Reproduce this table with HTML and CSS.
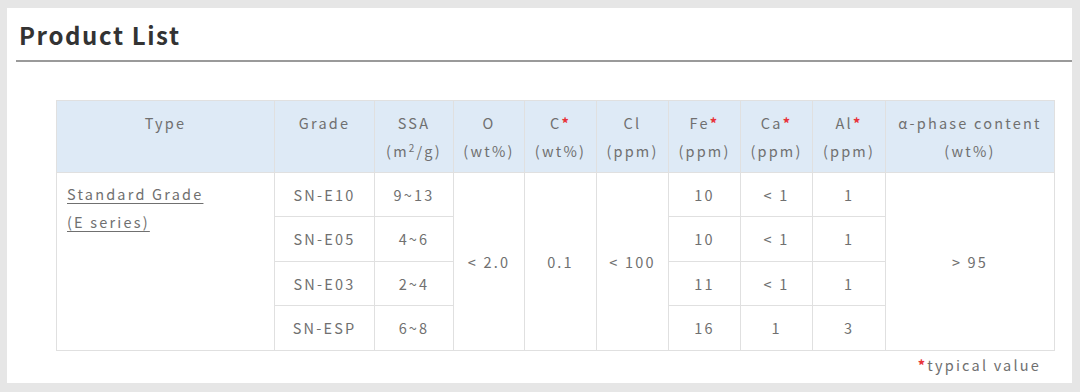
FILE: index.html
```html
<!DOCTYPE html>
<html>
<head>
<meta charset="utf-8">
<link rel="stylesheet" href="styles.css">
</head>
<body>
<div class="panel">
  <h1 class="title">Product List</h1>
  <div class="content">
    <table class="spec">
      <colgroup>
        <col class="c-type"><col class="c-grade"><col class="c-ssa"><col class="c-o"><col class="c-c"><col class="c-cl"><col class="c-fe"><col class="c-ca"><col class="c-al"><col class="c-alpha">
      </colgroup>
      <thead>
        <tr>
          <th>Type</th>
          <th>Grade</th>
          <th>SSA<br>(m<sup>2</sup>/g)</th>
          <th>O<br>(wt%)</th>
          <th>C<span class="ast">*</span><br>(wt%)</th>
          <th>Cl<br>(ppm)</th>
          <th>Fe<span class="ast">*</span><br>(ppm)</th>
          <th>Ca<span class="ast">*</span><br>(ppm)</th>
          <th>Al<span class="ast">*</span><br>(ppm)</th>
          <th>α-phase content<br>(wt%)</th>
        </tr>
      </thead>
      <tbody>
        <tr>
          <td rowspan="4" class="type"><a class="link">Standard Grade<br>(E series)</a></td>
          <td>SN-E10</td>
          <td>9~13</td>
          <td rowspan="4">&lt; 2.0</td>
          <td rowspan="4">0.1</td>
          <td rowspan="4">&lt; 100</td>
          <td>10</td>
          <td>&lt; 1</td>
          <td>1</td>
          <td rowspan="4">&gt; 95</td>
        </tr>
        <tr class="tall">
          <td>SN-E05</td>
          <td>4~6</td>
          <td>10</td>
          <td>&lt; 1</td>
          <td>1</td>
        </tr>
        <tr>
          <td>SN-E03</td>
          <td>2~4</td>
          <td>11</td>
          <td>&lt; 1</td>
          <td>1</td>
        </tr>
        <tr class="tall">
          <td>SN-ESP</td>
          <td>6~8</td>
          <td>16</td>
          <td>1</td>
          <td>3</td>
        </tr>
      </tbody>
    </table>
    <p class="note"><span class="ast">*</span>typical value</p>
  </div>
</div>
</body>
</html>
```

FILE: styles.css
```css
html, body {
  margin: 0;
  padding: 0;
}
body {
  background: #e6e6e6;
  padding: 8px 8px 0 7px;
  font-family: "Noto Sans CJK JP", "Noto Sans", sans-serif;
}
.panel {
  background: #fff;
  width: 1065px;
  height: 375px;
  box-sizing: border-box;
  padding-left: 9px;
}
.title {
  margin: 0;
  padding: 9px 0 7px 3px;
  font-size: 24px;
  line-height: 36px;
  font-weight: 700;
  letter-spacing: 1.6px;
  color: #333;
  border-bottom: 2px solid #9a9a9a;
}
.content {
  padding: 38px 18px 0 40px;
}
.spec {
  border-collapse: collapse;
  width: 998px;
  table-layout: fixed;
  color: #707070;
  font-size: 14.5px;
  letter-spacing: 2.2px;
}
.c-type { width: 218px; }
.c-grade { width: 100px; }
.c-ssa { width: 79px; }
.c-o { width: 71px; }
.c-c, .c-cl, .c-fe, .c-ca { width: 72px; }
.c-al { width: 73px; }
.c-alpha { width: 169px; }
.spec th, .spec td {
  border: 1px solid #e0e0e0;
  text-align: center;
  padding: 0;
}
.spec th {
  background: #deeaf6;
  font-weight: 400;
  vertical-align: top;
  line-height: 28px;
  height: 72px;
  padding-top: 8px;
  box-sizing: border-box;
}
.spec td {
  height: 43px;
  line-height: 28px;
  vertical-align: middle;
}
.spec tr.tall td {
  height: 44px;
}
.spec td.type {
  text-align: left;
  vertical-align: top;
  padding: 7px 10px;
}
.link {
  color: #707070;
  text-decoration: underline;
  text-underline-offset: 3px;
}
sup {
  font-size: 10px;
  line-height: 0;
  vertical-align: 5px;
}
.ast {
  color: #e8333a;
  font-weight: 700;
}
.note {
  margin: 0;
  text-align: right;
  padding-right: 13px;
  font-size: 14.5px;
  line-height: 28px;
  letter-spacing: 2.2px;
  color: #707070;
}
```
